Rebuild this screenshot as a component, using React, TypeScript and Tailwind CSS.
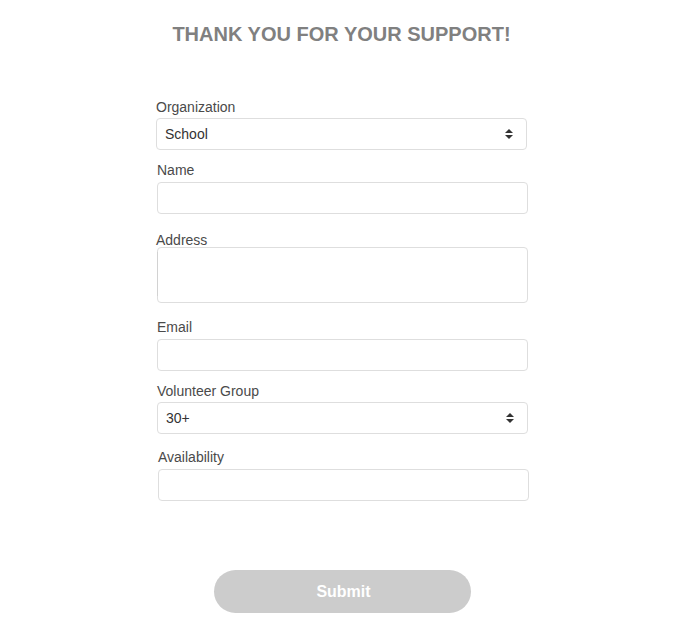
import React from "react";

function Arrows() {
  return (
    <svg width="8" height="12" viewBox="0 0 8 12" className="absolute right-[13px] top-1/2 -translate-y-1/2">
      <path d="M0 5 L4 1 L8 5 Z" fill="#333" />
      <path d="M0 7 L4 11 L8 7 Z" fill="#333" />
    </svg>
  );
}

export default function App() {
  const font = { fontFamily: '"Liberation Sans", Arial, Helvetica, sans-serif' };
  return (
    <div className="w-[675px] h-[643px] bg-white text-[#4a4a4a]" style={font}>
      <div className="pt-[20px] pl-[8px]">
        <h1 className="h-[28px] leading-[28px] text-center text-[20px] font-bold text-[#808080]">
          THANK YOU FOR YOUR SUPPORT!
        </h1>
      </div>

      <div className="ml-[156px] w-[371px]">
        <div className="mt-[49px] h-[20px] leading-[20px] text-[14px]">Organization</div>
        <div className="relative mt-[1px] h-[32px] border border-[#dedede] rounded-[4px] flex items-center pl-[8px] text-[14px] text-[#333]">
          School
          <Arrows />
        </div>
      </div>

      <div className="ml-[157px] w-[371px]">
        <div className="mt-[10px] h-[20px] leading-[20px] text-[14px]">Name</div>
        <div className="mt-[2px] h-[32px] border border-[#dedede] rounded-[4px]" />
      </div>

      <div className="ml-[156px] w-[372px]">
        <div className="mt-[16px] h-[20px] leading-[20px] text-[14px]">Address</div>
        <div className="mt-[-3px] ml-[1px] h-[56px] border border-[#dedede] rounded-[4px] relative">
          <div className="absolute left-[-1px] top-[4px] h-[44px] w-[1px] bg-[#d2d2d2]" />
        </div>
      </div>

      <div className="ml-[157px] w-[371px]">
        <div className="mt-[14px] h-[20px] leading-[20px] text-[14px]">Email</div>
        <div className="mt-[2px] h-[32px] border border-[#dedede] rounded-[4px]" />
      </div>

      <div className="ml-[157px] w-[371px]">
        <div className="mt-[10px] h-[20px] leading-[20px] text-[14px]">Volunteer Group</div>
        <div className="relative mt-[1px] h-[32px] border border-[#dedede] rounded-[4px] flex items-center pl-[8px] text-[14px] text-[#333]">
          30+
          <Arrows />
        </div>
      </div>

      <div className="ml-[158px] w-[371px]">
        <div className="mt-[13px] h-[20px] leading-[20px] text-[14px]">Availability</div>
        <div className="mt-[2px] h-[32px] border border-[#dedede] rounded-[4px]" />
      </div>

      <div className="ml-[214px] w-[257px]">
        <button className="mt-[69px] w-full h-[43px] pl-[2px] rounded-full bg-[#cccccc] text-white font-bold text-[16px]">
          Submit
        </button>
      </div>
    </div>
  );
}
